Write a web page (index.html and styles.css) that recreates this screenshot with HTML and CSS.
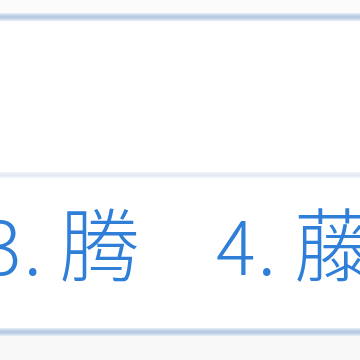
FILE: index.html
```html
<!DOCTYPE html>
<html lang="zh">
<head>
<meta charset="UTF-8">
<meta name="viewport" content="width=device-width, initial-scale=1.0">
<title>列表</title>
<link rel="stylesheet" href="styles.css">
</head>
<body>

<div class="top-band"></div>
<div class="rule"></div>
<div class="blank"></div>
<div class="sep"></div>

<div class="row">
  <div class="item"><span class="num">3.</span><span class="ch">腾</span></div>
  <div class="item"><span class="num">4.</span><span class="ch">藤</span></div>
</div>

<div class="rule"></div>
<div class="bottom-band"></div>

</body>
</html>
```

FILE: styles.css
```css
body, html {
  margin: 0;
  padding: 0;
  background-color: #ffffff;
  overflow: hidden;
}

.top-band {
  height: 13px;
  background-color: #fbfbfb;
}

.rule {
  height: 8px;
  background: linear-gradient(#e6edf6, #b9cbe2 40%, #b9cbe2 60%, #e6edf6);
}

.blank {
  height: 151px;
}

.sep {
  height: 6px;
  background: linear-gradient(#f3f6fb, #e1e9f4 50%, #f3f6fb);
}

.row {
  display: flex;
  height: 150px;
  margin-left: -18px;
  color: #2f7fd8;
  white-space: nowrap;
}

.item {
  flex: 0 0 234px;
  display: flex;
  align-items: baseline;
  padding-top: 22px;
}

.num {
  width: 78px;
  font-family: "Noto Sans CJK SC", sans-serif;
  font-size: 74px;
  font-weight: 300;
  letter-spacing: 2px;
  line-height: 1;
}

.ch {
  width: 80px;
  font-family: "Noto Sans CJK SC", sans-serif;
  font-size: 80px;
  font-weight: 300;
  line-height: 1;
}

.bottom-band {
  height: 40px;
  background-color: #f8f8f8;
}
```
